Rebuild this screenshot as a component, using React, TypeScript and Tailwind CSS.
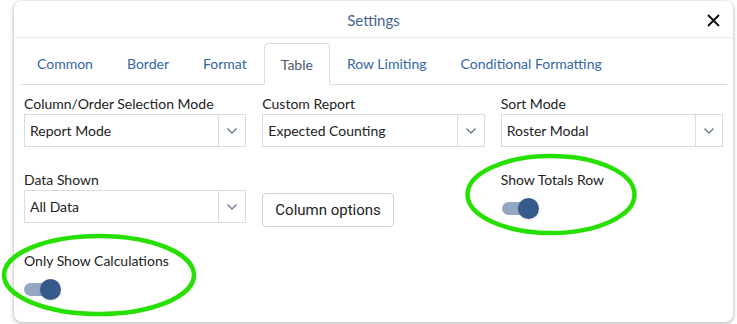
import { memo } from 'react';

const TABS = ['Common', 'Border', 'Format', 'Table', 'Row Limiting', 'Conditional Formatting'];

const Chevron = () => (
  <svg width="12" height="8" viewBox="0 0 12 8" fill="none" stroke="#6b7a8f" strokeWidth={1.4}>
    <path d="M1.5 1.5l4.5 4.5 4.5-4.5" />
  </svg>
);

const Select = memo(function Select({ label, value }: { label: string; value: string }) {
  return (
    <div className="flex flex-col">
      <div className="text-[14px] leading-4 text-[#222]">{label}</div>
      <div className="mt-[2px] flex h-[33px] border border-[#dcdcdc] bg-white">
        <div className="flex flex-1 items-center pl-[5px] text-[14px] text-[#222]">{value}</div>
        <div className="flex w-[27px] items-center justify-center border-l border-[#dcdcdc]">
          <Chevron />
        </div>
      </div>
    </div>
  );
});

const Toggle = () => (
  <div className="relative h-[21px] w-[37px]">
    <div className="absolute left-0 top-[4px] h-[13px] w-[31px] rounded-full bg-[#94a7c3]" />
    <div className="absolute right-0 top-0 h-[21px] w-[21px] rounded-full bg-[#355a8b] shadow-sm" />
  </div>
);

export default function App() {
  return (
    <div className="relative h-[324px] w-[737px] bg-white" style={{ fontFamily: 'Lato, "Noto Sans", sans-serif' }}>
      <div className="absolute left-[14px] top-[1px] h-[321px] w-[719px] rounded-[8px] bg-white shadow-[0_1px_4px_rgba(0,0,0,0.35)]">
        {/* header */}
        <div className="relative flex h-[37px] items-center justify-center border-b border-[#ececec]">
          <span className="pt-[2px] text-[15px] text-[#45638f]">Settings</span>
          <svg className="absolute right-[13px] top-[13px]" width="13" height="13" viewBox="0 0 13 13" stroke="#111" strokeWidth={2}>
            <path d="M1 1l11 11M12 1L1 12" />
          </svg>
        </div>

        {/* tabs */}
        <div className="mx-[6px] mt-[5px] flex h-[42px] border-b border-[#dcdcdc]">
          {TABS.map((t) =>
            t === 'Table' ? (
              <div
                key={t}
                className="-mb-px flex items-center rounded-t-[4px] border border-b-white border-[#dcdcdc] bg-white px-[16px] text-[14px] text-[#4a5a70]"
              >
                {t}
              </div>
            ) : (
              <div key={t} className="flex items-center px-[17px] text-[14px] text-[#3466a5]">
                {t}
              </div>
            )
          )}
        </div>

        {/* body */}
        <div className="px-[10px] pt-[11px]">
          <div className="grid grid-cols-3 gap-x-[16px]">
            <Select label="Column/Order Selection Mode" value="Report Mode" />
            <Select label="Custom Report" value="Expected Counting" />
            <Select label="Sort Mode" value="Roster Modal" />
          </div>

          <div className="mt-[25px] grid grid-cols-3 gap-x-[16px]">
            <Select label="Data Shown" value="All Data" />
            <div className="pt-[21px]">
              <button
                className="h-[34px] rounded-[4px] border border-[#cfcfcf] bg-white px-[12px] text-[15px] text-[#222]"
                style={{ fontFamily: 'Roboto, sans-serif' }}
              >
                Column options
              </button>
            </div>
            <div className="flex flex-col">
              <div className="text-[14px] leading-4 text-[#222]">Show Totals Row</div>
              <div className="mt-[10px] pl-[1px]">
                <Toggle />
              </div>
            </div>
          </div>

          <div className="mt-[26px] flex flex-col">
            <div className="text-[14px] leading-4 text-[#222]">Only Show Calculations</div>
            <div className="mt-[10px]">
              <Toggle />
            </div>
          </div>
        </div>
      </div>

      {/* annotation circles */}
      <svg className="pointer-events-none absolute left-0 top-0" width="737" height="324">
        <ellipse cx="551" cy="194.5" rx="83.5" ry="38.5" fill="none" stroke="#26e000" strokeWidth={4.5} />
        <ellipse cx="99" cy="275" rx="95" ry="39" fill="none" stroke="#26e000" strokeWidth={4.5} />
      </svg>
    </div>
  );
}
